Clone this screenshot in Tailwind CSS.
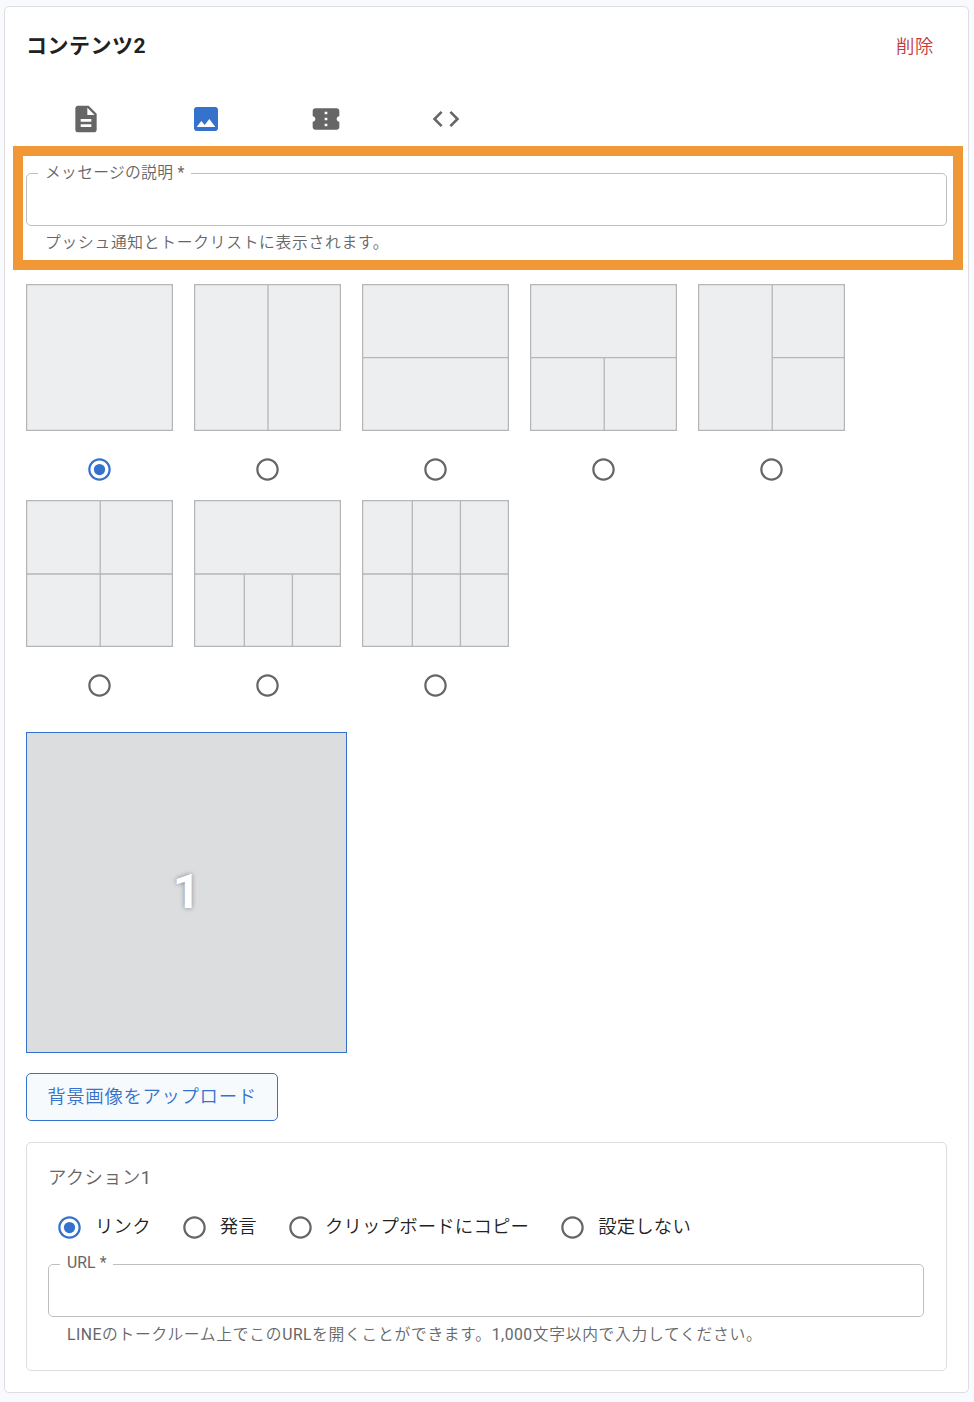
<!DOCTYPE html>
<html lang="ja">
<head>
    <meta charset="UTF-8">
    <meta name="viewport" content="width=device-width, initial-scale=1.0">
    <title>コンテンツ2</title>
    <script src="https://cdn.jsdelivr.net/npm/@tailwindcss/browser@4"></script>
    <style>
        body {
            font-family: Roboto, 'Noto Sans CJK JP', sans-serif;
        }
    </style>
</head>
<body class="bg-[#f8fafd] pt-[6px] pl-1 h-[1402px] overflow-hidden text-[#212121]">

    <!-- Shared icons -->
    <svg class="hidden">
        <symbol id="radio-off" viewBox="0 0 24 24">
            <path d="M12 2C6.48 2 2 6.48 2 12s4.48 10 10 10 10-4.48 10-10S17.52 2 12 2zm0 18c-4.42 0-8-3.58-8-8s3.58-8 8-8 8 3.58 8 8-3.58 8-8 8z"/>
        </symbol>
        <symbol id="radio-on" viewBox="0 0 24 24">
            <path d="M12 2C6.48 2 2 6.48 2 12s4.48 10 10 10 10-4.48 10-10S17.52 2 12 2zm0 18c-4.42 0-8-3.58-8-8s3.58-8 8-8 8 3.58 8 8-3.58 8-8 8z"/>
            <circle cx="12" cy="12" r="5"/>
        </symbol>
    </svg>

    <div class="flex flex-col w-[965px] h-[1387px] bg-white border border-[#dcdee0] rounded-[5px]">

        <!-- Header -->
        <div class="flex justify-between items-center h-[52px] mt-[13px] pl-[21px] pr-[34px]">
            <h2 class="pt-[2px] text-[21px] font-bold tracking-[0.5px]">コンテンツ2</h2>
            <button class="pt-[2px] text-[18.4px] font-[350] tracking-[0.6px] text-[#c5393a]">削除</button>
        </div>

        <!-- Content type tabs -->
        <div class="flex items-center h-[40px] mt-[27px] pl-[21px] fill-[#666666]">
            <div class="w-[120px] flex justify-center">
                <svg class="size-8" viewBox="0 0 24 24"><path d="M14 2H6c-1.1 0-1.99.9-1.99 2L4 20c0 1.100.890 2 1.990 2H18c1.100 0 2-.9 2-2V8l-6-6zm2 16H8v-2h8v2zm0-4H8v-2h8v2zm-3-5V3.500L18.500 9H13z"/></svg>
            </div>
            <div class="w-[120px] flex justify-center">
                <svg class="size-8 fill-[#3572cb]" viewBox="0 0 24 24"><path fill-rule="evenodd" d="M19 3H5c-1.100 0-2 .9-2 2v14c0 1.100.9 2 2 2h14c1.100 0 2-.9 2-2V5c0-1.100-.9-2-2-2zM5 18l3.500-4.500 2.500 3.010L14.500 12l4.500 6H5z"/></svg>
            </div>
            <div class="w-[120px] flex justify-center">
                <svg class="size-8" viewBox="0 0 24 24"><path d="M22 10V6c0-1.110-.9-2-2-2H4c-1.100 0-1.990.890-1.990 2v4c1.100 0 1.990.9 1.990 2s-.89 2-2 2v4c0 1.100.9 2 2 2h16c1.100 0 2-.9 2-2v-4c-1.100 0-2-.9-2-2s.9-2 2-2zm-9 7.500h-2v-2h2v2zm0-4.500h-2v-2h2v2zm0-4.500h-2v-2h2v2z"/></svg>
            </div>
            <div class="w-[120px] flex justify-center">
                <svg class="size-8" viewBox="0 0 24 24"><path d="M9.400 16.600L4.800 12l4.600-4.600L8 6l-6 6 6 6 1.400-1.400zm5.200 0l4.600-4.600-4.600-4.600L16 6l6 6-6 6-1.400-1.400z"/></svg>
            </div>
        </div>

        <!-- Message description -->
        <div class="w-[950px] h-[124px] ml-2 mt-[7px] pl-[3px] pt-[5px] border-10 border-[#f09836] text-[#666666] text-[15.75px] font-[350]">
            <fieldset class="w-[921px] h-[65px] pl-[11px] border border-[#bfbfbf] rounded-[5px]">
                <legend class="w-[153px] h-6 pl-[7px] leading-6 tracking-[0.32px] whitespace-nowrap">メッセージの説明 <span class="font-normal">*</span></legend>
            </fieldset>
            <p class="ml-[19px] mt-[5px] leading-6 tracking-[0.72px]">プッシュ通知とトークリストに表示されます。</p>
        </div>

        <!-- Layout templates -->
        <div class="grid grid-cols-[repeat(5,147px)] gap-x-[21px] auto-rows-[216px] ml-[21px] mt-[14px] fill-[#666666]">
            <div class="flex flex-col items-center">
                <svg class="size-[147px] fill-[#edeef0] stroke-[#b5b6b7]" viewBox="0 0 147 147"><rect x=".6" y=".6" width="145.8" height="145.8" stroke-width="1.3"/></svg>
                <svg class="size-[27px] mt-[25px] fill-[#3572cb]"><use href="#radio-on"/></svg>
            </div>
            <div class="flex flex-col items-center">
                <svg class="size-[147px] fill-[#edeef0] stroke-[#b5b6b7]" viewBox="0 0 147 147"><rect x=".6" y=".6" width="145.8" height="145.8" stroke-width="1.3"/><path d="M74 0v147" stroke-width="1.3"/></svg>
                <svg class="size-[27px] mt-[25px]"><use href="#radio-off"/></svg>
            </div>
            <div class="flex flex-col items-center">
                <svg class="size-[147px] fill-[#edeef0] stroke-[#b5b6b7]" viewBox="0 0 147 147"><rect x=".6" y=".6" width="145.8" height="145.8" stroke-width="1.3"/><path d="M0 73.700h147" stroke-width="1.3"/></svg>
                <svg class="size-[27px] mt-[25px]"><use href="#radio-off"/></svg>
            </div>
            <div class="flex flex-col items-center">
                <svg class="size-[147px] fill-[#edeef0] stroke-[#b5b6b7]" viewBox="0 0 147 147"><rect x=".6" y=".6" width="145.8" height="145.8" stroke-width="1.3"/><path d="M0 73.700h147M74.200 74v73" stroke-width="1.3"/></svg>
                <svg class="size-[27px] mt-[25px]"><use href="#radio-off"/></svg>
            </div>
            <div class="flex flex-col items-center">
                <svg class="size-[147px] fill-[#edeef0] stroke-[#b5b6b7]" viewBox="0 0 147 147"><rect x=".6" y=".6" width="145.8" height="145.8" stroke-width="1.3"/><path d="M74.200 0v147M74 73.700h73" stroke-width="1.3"/></svg>
                <svg class="size-[27px] mt-[25px]"><use href="#radio-off"/></svg>
            </div>
            <div class="flex flex-col items-center">
                <svg class="size-[147px] fill-[#edeef0] stroke-[#b5b6b7]" viewBox="0 0 147 147"><rect x=".6" y=".6" width="145.8" height="145.8" stroke-width="1.3"/><path d="M0 74h147M74.200 0v147" stroke-width="1.3"/></svg>
                <svg class="size-[27px] mt-[25px]"><use href="#radio-off"/></svg>
            </div>
            <div class="flex flex-col items-center">
                <svg class="size-[147px] fill-[#edeef0] stroke-[#b5b6b7]" viewBox="0 0 147 147"><rect x=".6" y=".6" width="145.8" height="145.8" stroke-width="1.3"/><path d="M0 74h147M50.300 74v73M98.400 74v73" stroke-width="1.3"/></svg>
                <svg class="size-[27px] mt-[25px]"><use href="#radio-off"/></svg>
            </div>
            <div class="flex flex-col items-center">
                <svg class="size-[147px] fill-[#edeef0] stroke-[#b5b6b7]" viewBox="0 0 147 147"><rect x=".6" y=".6" width="145.8" height="145.8" stroke-width="1.3"/><path d="M0 74h147M50.300 0v147M98.400 0v147" stroke-width="1.3"/></svg>
                <svg class="size-[27px] mt-[25px]"><use href="#radio-off"/></svg>
            </div>
        </div>

        <!-- Image preview -->
        <div class="flex items-center justify-center size-[321px] ml-[21px] mt-4 pb-[2px] bg-[#dcdddf] border border-[#3572cb]">
            <span class="text-5xl font-bold text-white text-shadow-[0_0_5px_rgba(0,0,0,0.4)]">1</span>
        </div>

        <button class="w-[252px] h-12 ml-[21px] mt-5 bg-[#f6fafd] border border-[#3572cb] rounded-[5px] text-[18.4px] font-[350] tracking-[0.65px] text-[#3572cb]">背景画像をアップロード</button>

        <!-- Action -->
        <div class="w-[921px] h-[229px] ml-[21px] mt-[21px] pl-[21px] pt-[21px] border border-[#dedede] rounded-[5px] font-[350]">
            <p class="text-[18.4px] leading-7 tracking-[0.35px] text-[#666666]">アクション<span class="font-normal">1</span></p>
            <div class="flex items-center h-[31px] mt-5 pl-2 text-[18.4px] tracking-[0.18px]">
                <svg class="size-[27px] fill-[#3572cb]"><use href="#radio-on"/></svg>
                <span class="ml-3 mr-[30px] pb-[2px]">リンク</span>
                <svg class="size-[27px] fill-[#666666]"><use href="#radio-off"/></svg>
                <span class="ml-3 mr-[30px] pb-[2px]">発言</span>
                <svg class="size-[27px] fill-[#666666]"><use href="#radio-off"/></svg>
                <span class="ml-[11px] mr-[30px] pb-[2px]">クリップボードにコピー</span>
                <svg class="size-[27px] fill-[#666666]"><use href="#radio-off"/></svg>
                <span class="ml-3 pb-[2px]">設定しない</span>
            </div>
            <div class="mt-[9px] text-[#666666] text-[15.75px]">
                <fieldset class="w-[876px] h-[65px] pl-[11px] border border-[#bfbfbf] rounded-[5px]">
                    <legend class="w-[53px] h-6 pl-[7px] leading-[22px] font-normal tracking-[0.1px] whitespace-nowrap">URL *</legend>
                </fieldset>
                <p class="ml-[19px] mt-[6px] leading-6 tracking-[0.72px]"><span class="font-normal tracking-[0.5px]">LINE</span>のトークルーム上でこの<span class="font-normal tracking-[0.5px]">URL</span>を開くことができます。<span class="font-normal tracking-[0.5px]">1,000</span>文字以内で入力してください。</p>
            </div>
        </div>
    </div>

</body>
</html>
